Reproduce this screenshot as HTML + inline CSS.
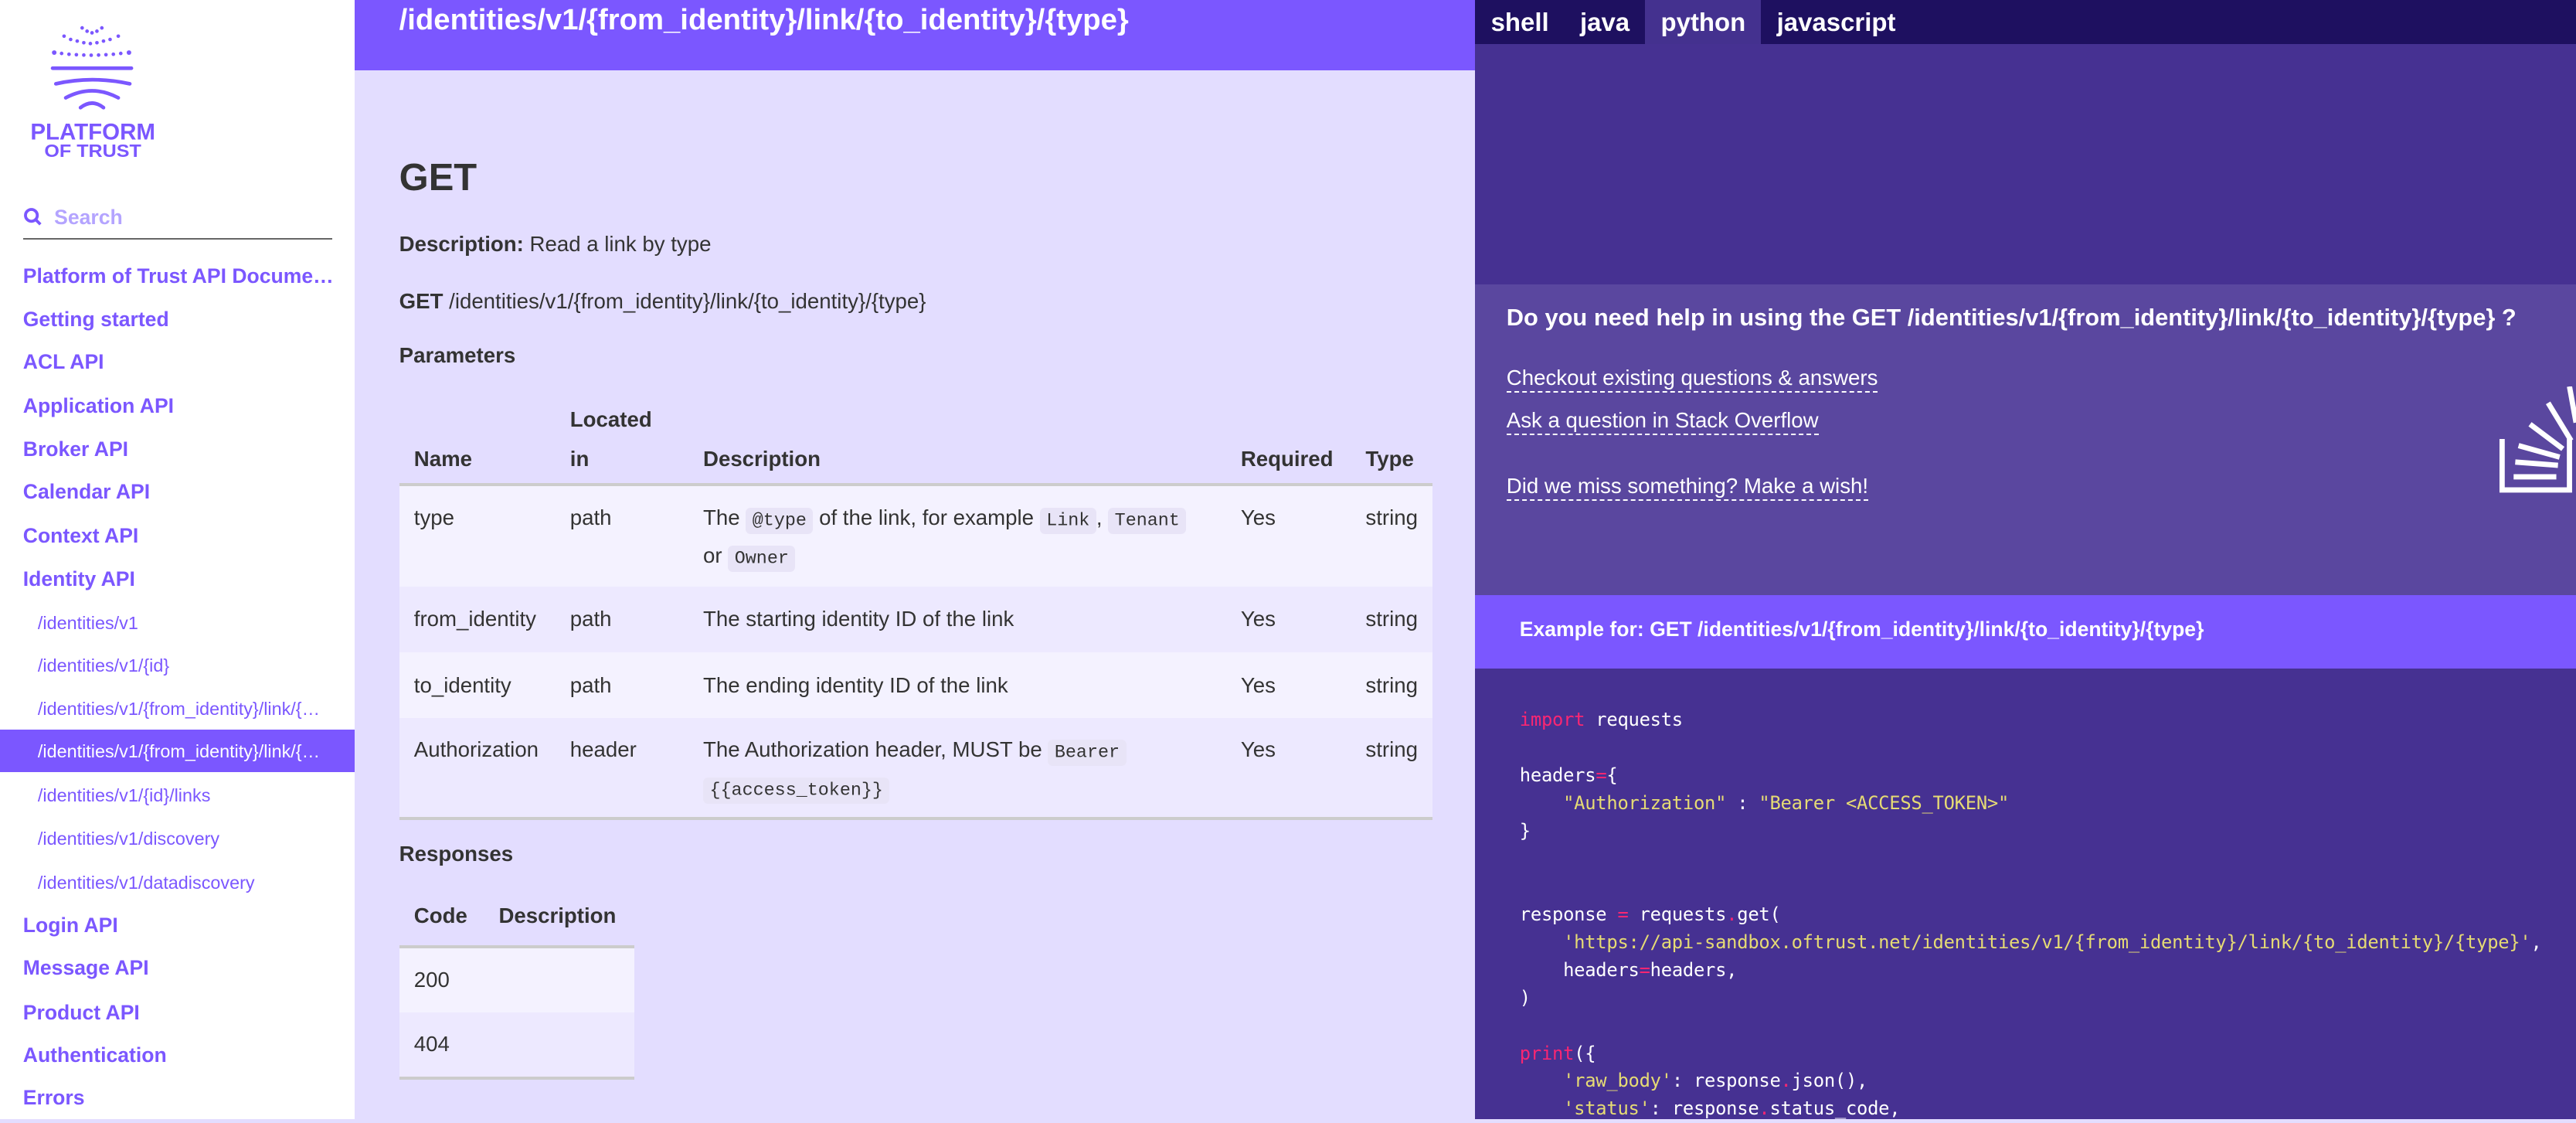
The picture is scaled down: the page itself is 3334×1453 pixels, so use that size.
<!DOCTYPE html>
<html><head><meta charset="utf-8"><style>
html{zoom:2.12628}
*{box-sizing:border-box;margin:0;padding:0}
body{width:1568px;height:681px;overflow:hidden;font-family:"Liberation Sans",Arial,sans-serif;background:#e3ddff;position:relative;color:#333}
.side{position:absolute;left:0;top:0;width:216px;height:681px;background:#fff}
.nav a{display:block;position:absolute;left:14px;color:#7b57ff;font-weight:bold;font-size:12.5px;white-space:nowrap;text-decoration:none}
.nav a.s{font-weight:normal;font-size:11px;left:23px}
.nav .act{position:absolute;left:0;top:444px;width:216px;height:26px;background:#7b57ff}
.main{position:absolute;left:216px;top:0;width:682px;height:681px}
.hdr{height:43px;background:#7b57ff;color:#fff;font-weight:bold;font-size:18px;padding:2px 0 0 27px}
.m{position:absolute;left:27px;font-size:13px;color:#333}
table{border-collapse:collapse;font-size:13px}
td,th{padding:0 9px;text-align:left;vertical-align:top}
code{font-family:"Liberation Mono",monospace;font-size:11px;background:#e8e4f7;border-radius:3px;padding:2px 4px;color:#333}
.right{position:absolute;left:898px;top:0;width:670px;height:681px;background:#463192}
.tabs{height:27px;background:#1e1060;color:#fff;font-weight:bold;font-size:15.5px}
.tabs span{display:inline-block;height:27px;line-height:27px;padding:0 9.5px}
.help{position:absolute;top:173px;left:0;width:670px;height:189px;background:#5a479f;color:#fff}
.help a{position:absolute;left:19px;color:#fff;font-size:13px;border-bottom:1px dashed #fff;line-height:16px}
.ex{position:absolute;top:362px;left:0;width:670px;height:45px;background:#7b57ff;color:#fff;font-weight:bold;font-size:12.5px;padding:14px 0 0 27px}
pre{position:absolute;top:430px;left:27px;font-family:"DejaVu Sans Mono","Liberation Mono",monospace;font-size:11.2px;line-height:16.9px;color:#fff;letter-spacing:-0.12px}
.k{color:#f92672}.y{color:#e6db74}
</style></head><body>
<div class="side">
<svg style="position:absolute;left:0;top:0" width="110" height="100" viewBox="0 0 110 100">
<g fill="#7b57ff">
<circle cx="50" cy="17" r="1.1"/><circle cx="53" cy="19" r="1.1"/><circle cx="56" cy="20" r="1.1"/><circle cx="59" cy="19" r="1.1"/><circle cx="62" cy="17" r="1.1"/>
<circle cx="39" cy="22" r="1.1"/><circle cx="43" cy="24" r="1.1"/><circle cx="47" cy="25" r="1.1"/><circle cx="51" cy="26" r="1.1"/><circle cx="55" cy="26.5" r="1.1"/><circle cx="59" cy="26" r="1.1"/><circle cx="63" cy="25" r="1.1"/><circle cx="67" cy="24" r="1.1"/><circle cx="72" cy="22" r="1.1"/>
<circle cx="33" cy="32" r="1.4"/><circle cx="37.5" cy="32.5" r="1.1"/><circle cx="42" cy="33" r="1.1"/><circle cx="46.5" cy="33.3" r="1.1"/><circle cx="51" cy="33.5" r="1.1"/><circle cx="55.5" cy="33.6" r="1.1"/><circle cx="60" cy="33.5" r="1.1"/><circle cx="64.5" cy="33.3" r="1.1"/><circle cx="69" cy="33" r="1.1"/><circle cx="73.5" cy="32.5" r="1.1"/><circle cx="78.5" cy="32" r="1.4"/>
</g>
<g stroke="#7b57ff" stroke-width="2.2" fill="none" stroke-linecap="round">
<path d="M32 41.5 H80"/><path d="M34 51 Q56 46 79 51"/><path d="M40 59.5 Q56 51 72 59.5"/><path d="M49 65.5 Q56 60 63 65.5"/>
</g>
<text x="56.5" y="85" text-anchor="middle" font-family="Liberation Sans" font-weight="bold" font-size="14" fill="#7b57ff" textLength="76" lengthAdjust="spacingAndGlyphs">PLATFORM</text>
<text x="56.5" y="95.5" text-anchor="middle" font-family="Liberation Sans" font-weight="bold" font-size="11" fill="#7b57ff" textLength="59" lengthAdjust="spacingAndGlyphs">OF TRUST</text>
</svg>
<svg style="position:absolute;left:14px;top:126px" width="12" height="12" viewBox="0 0 12 12"><circle cx="5" cy="5" r="3.6" stroke="#7b57ff" stroke-width="1.8" fill="none"/><path d="M7.6 7.6 L10.5 10.5" stroke="#7b57ff" stroke-width="1.8"/></svg>
<div style="position:absolute;left:33px;top:125px;color:#b4a4ff;font-weight:bold;font-size:12.5px">Search</div>
<div style="position:absolute;left:14px;top:145px;width:188px;height:1px;background:#666"></div>
<div class="nav">
<div class="act"></div>
<a style="top:161px">Platform of Trust API Docume…</a>
<a style="top:187px">Getting started</a>
<a style="top:213px">ACL API</a>
<a style="top:240px">Application API</a>
<a style="top:266px">Broker API</a>
<a style="top:292px">Calendar API</a>
<a style="top:319px">Context API</a>
<a style="top:345px">Identity API</a>
<a class="s" style="top:373px">/identities/v1</a>
<a class="s" style="top:399px">/identities/v1/{id}</a>
<a class="s" style="top:425px">/identities/v1/{from_identity}/link/{…</a>
<a class="s" style="top:451px;color:#fff">/identities/v1/{from_identity}/link/{…</a>
<a class="s" style="top:478px">/identities/v1/{id}/links</a>
<a class="s" style="top:504px">/identities/v1/discovery</a>
<a class="s" style="top:531px">/identities/v1/datadiscovery</a>
<a style="top:556px">Login API</a>
<a style="top:582px">Message API</a>
<a style="top:609px">Product API</a>
<a style="top:635px">Authentication</a>
<a style="top:661px">Errors</a>
</div>
</div>
<div class="main">
<div class="hdr">/identities/v1/{from_identity}/link/{to_identity}/{type}</div>
<div class="m" style="top:95px;font-size:23px;font-weight:bold">GET</div>
<div class="m" style="top:141px"><b>Description:</b> Read a link by type</div>
<div class="m" style="top:176px"><b>GET</b> /identities/v1/{from_identity}/link/{to_identity}/{type}</div>
<div class="m" style="top:209px"><b>Parameters</b></div>
<table class="m" style="top:243px;width:629px">
<tr style="height:50px;border-bottom:2px solid #ccc;line-height:24px"><th style="vertical-align:bottom;padding-bottom:3px;width:95px">Name</th><th style="vertical-align:bottom;padding-bottom:3px;width:81px">Located in</th><th style="vertical-align:bottom;padding-bottom:3px">Description</th><th style="vertical-align:bottom;padding-bottom:3px;width:76px">Required</th><th style="vertical-align:bottom;padding-bottom:3px;width:45px">Type</th></tr>
<tr style="height:62px;background:#f4f2ff;line-height:21px"><td style="padding-top:9px">type</td><td style="padding-top:9px">path</td><td style="padding-top:9px;padding-right:14px">The <code>@type</code> of the link, for example <code>Link</code>, <code>Tenant</code> or <code>Owner</code></td><td style="padding-top:9px">Yes</td><td style="padding-top:9px">string</td></tr>
<tr style="height:40px;background:#ede9ff"><td style="vertical-align:middle">from_identity</td><td style="vertical-align:middle">path</td><td style="vertical-align:middle">The starting identity ID of the link</td><td style="vertical-align:middle">Yes</td><td style="vertical-align:middle">string</td></tr>
<tr style="height:40px;background:#f4f2ff"><td style="vertical-align:middle">to_identity</td><td style="vertical-align:middle">path</td><td style="vertical-align:middle">The ending identity ID of the link</td><td style="vertical-align:middle">Yes</td><td style="vertical-align:middle">string</td></tr>
<tr style="height:61px;background:#ede9ff;line-height:21px;border-bottom:2px solid #ccc"><td style="padding-top:9px">Authorization</td><td style="padding-top:9px">header</td><td style="padding-top:9px">The Authorization header, MUST be <code>Bearer</code> <code>{{access_token}}</code></td><td style="padding-top:9px">Yes</td><td style="padding-top:9px">string</td></tr>
</table>
<div class="m" style="top:512px"><b>Responses</b></div>
<table class="m" style="top:540px;width:143px">
<tr style="height:36px;border-bottom:2px solid #ccc"><th style="vertical-align:middle">Code</th><th style="vertical-align:middle">Description</th></tr>
<tr style="height:40px;background:#f4f2ff"><td style="vertical-align:middle">200</td><td></td></tr>
<tr style="height:40px;background:#ede9ff;border-bottom:2px solid #ccc"><td style="vertical-align:middle">404</td><td></td></tr>
</table>
</div>
<div class="right">
<div class="tabs"><span>shell</span><span>java</span><span style="background:#44318f">python</span><span>javascript</span></div>
<div class="help">
<div style="position:absolute;left:19px;top:12px;font-weight:bold;font-size:14.5px">Do you need help in using the GET /identities/v1/{from_identity}/link/{to_identity}/{type} ?</div>
<a style="top:49px">Checkout existing questions &amp; answers</a>
<a style="top:75px">Ask a question in Stack Overflow</a>
<a style="top:115px">Did we miss something? Make a wish!</a>
<svg style="position:absolute;left:622px;top:62px" width="48" height="66" viewBox="0 0 48 66">
<g fill="none" stroke="#fff" stroke-width="3.2">
<path d="M3 32 V63 H44 V32"/><path d="M10 55 H36"/><path d="M11 46 L37 48"/><path d="M13 36 L38 43"/><path d="M20 23 L40 38"/><path d="M31 10 L45 33"/><path d="M44 0 L48 22"/>
</g></svg>
</div>
<div class="ex">Example for: GET /identities/v1/{from_identity}/link/{to_identity}/{type}</div>
<pre><span class="k">import</span> requests

headers<span class="k">=</span>{
    <span class="y">"Authorization"</span> : <span class="y">"Bearer &lt;ACCESS_TOKEN&gt;"</span>
}


response <span class="k">=</span> requests<span class="k">.</span>get(
    <span class="y">'https://api-sandbox.oftrust.net/identities/v1/{from_identity}/link/{to_identity}/{type}'</span>,
    headers<span class="k">=</span>headers,
)

<span class="k">print</span>({
    <span class="y">'raw_body'</span>: response<span class="k">.</span>json(),
    <span class="y">'status'</span>: response<span class="k">.</span>status_code,
</pre>
</div>
</body></html>
